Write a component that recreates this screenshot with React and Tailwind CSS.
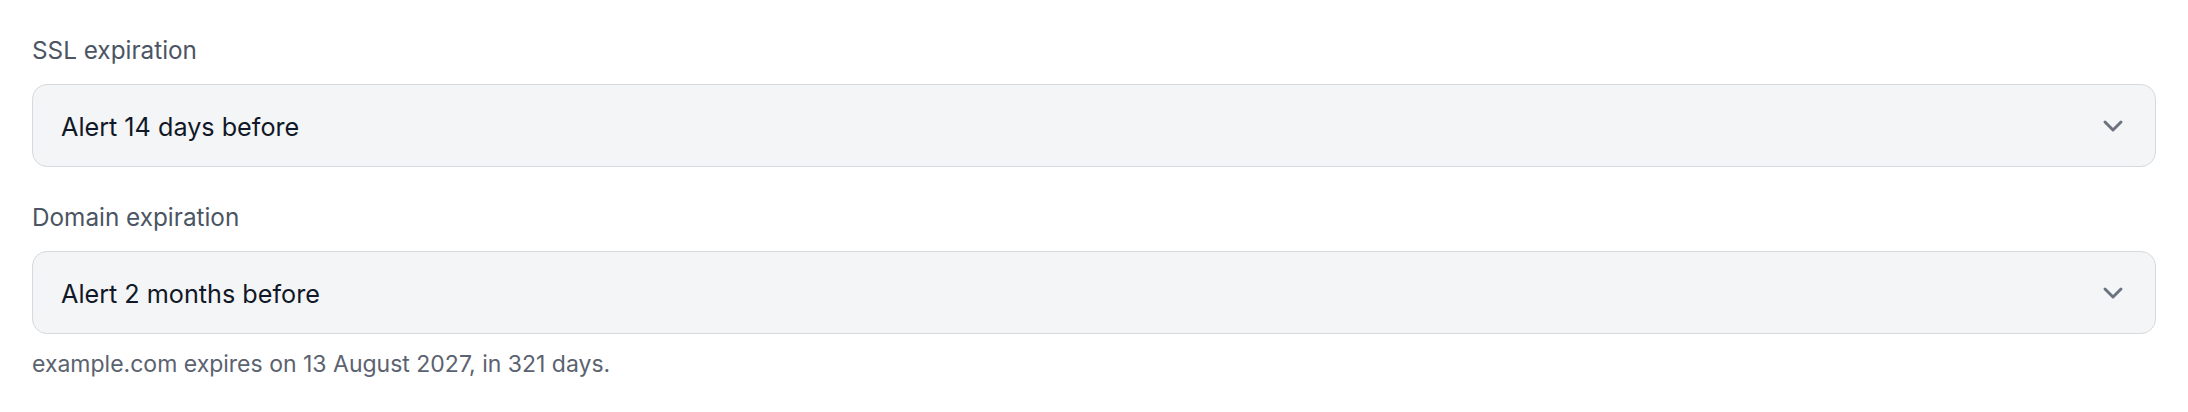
import React from 'react';
import { ChevronDown } from 'lucide-react';

function SelectField({ label, value, help }) {
  return (
    <div className="flex flex-col">
      <label className="text-[24.3px] leading-[34px] text-[#4b5563]">{label}</label>
      <button className="mt-[17px] h-[83px] w-full flex items-center justify-between pl-[28px] pr-[26px] rounded-[15px] border-[1.5px] border-[#d6d9dd] bg-[#f4f5f6] text-left">
        <span className="pt-[5px] text-[25.2px] text-[#111827]">{value}</span>
        <ChevronDown size={32} strokeWidth={2.2} color="#6b7280" />
      </button>
      {help && <p className="mt-[14px] text-[23px] leading-[33px] text-[#5b6270]">{help}</p>}
    </div>
  );
}

export default function App() {
  return (
    <div className="min-h-screen bg-white px-[32px] pt-[33px] pb-[32px] font-['Inter',sans-serif] flex flex-col gap-[33px]">
      <SelectField label="SSL expiration" value="Alert 14 days before" />
      <SelectField
        label="Domain expiration"
        value="Alert 2 months before"
        help="example.com expires on 13 August 2027, in 321 days."
      />
    </div>
  );
}
